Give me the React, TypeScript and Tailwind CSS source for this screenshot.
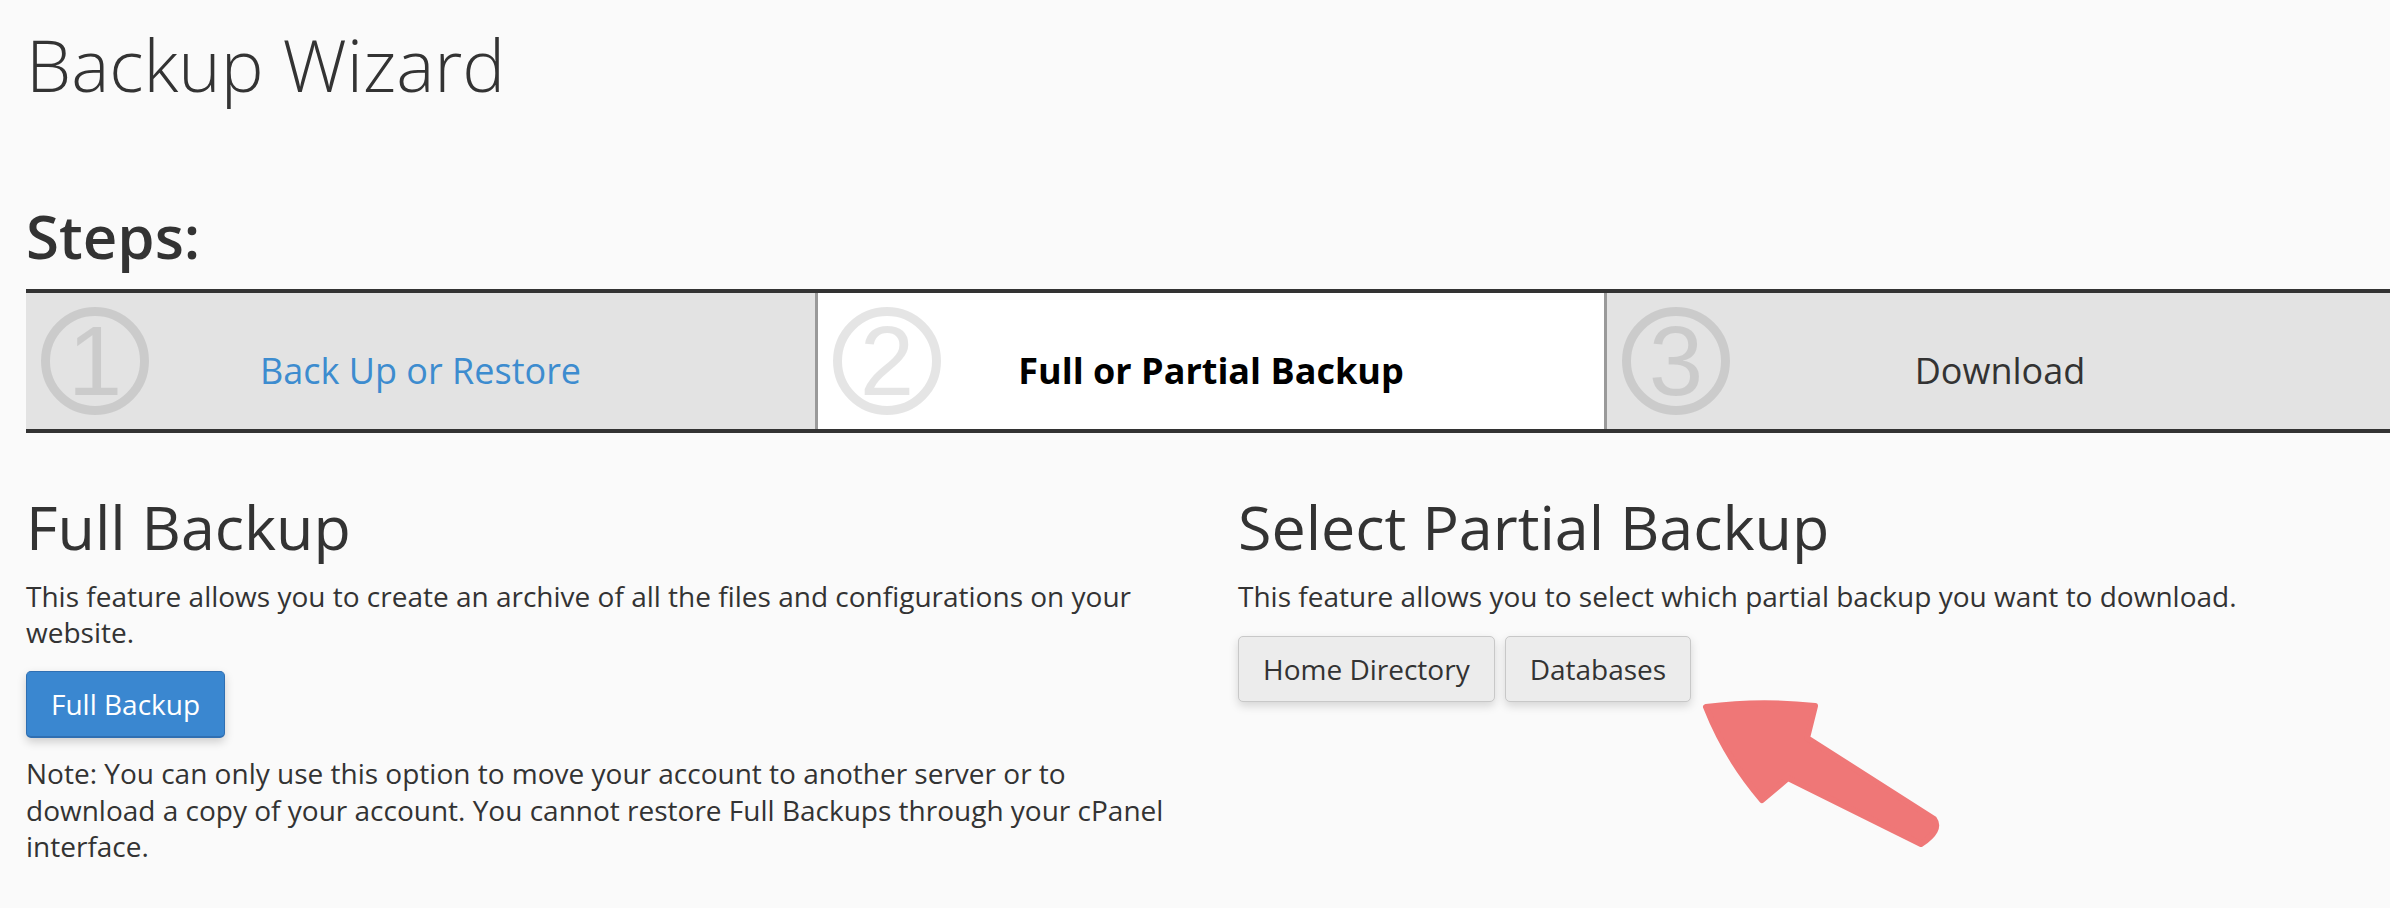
import React from "react";

const STEPS = [
  { n: "1", label: "Back Up or Restore", state: "link" },
  { n: "2", label: "Full or Partial Backup", state: "active" },
  { n: "3", label: "Download", state: "todo" },
];

function StepNumber({ n }: { n: string }) {
  return (
    <svg width="108" height="108" viewBox="0 0 108 108" className="absolute left-[15px] top-[14px]">
      <circle cx="54" cy="54" r="49.5" fill="none" stroke="black" strokeOpacity="0.1" strokeWidth="9" />
      <text
        x="54"
        y="88"
        textAnchor="middle"
        fontFamily="'Liberation Sans', Arial, sans-serif"
        fontSize="98"
        fill="black"
        fillOpacity="0.1"
      >
        {n}
      </text>
    </svg>
  );
}

function PointerArrow() {
  return (
    <svg width="270" height="190" viewBox="0 0 270 190" className="absolute left-[1690px] top-[680px]">
      <path
        d="M16 27 Q70 20 125 26 L117 58 L244 139 Q252 150 231 164 L98 98 L72 120 Q36 78 16 27 Z"
        fill="#ef7777"
        stroke="#ef7777"
        strokeWidth="6"
        strokeLinejoin="round"
      />
    </svg>
  );
}

export default function App() {
  return (
    <div className="relative min-h-screen w-full overflow-hidden bg-[#fafafa] font-['Open_Sans',sans-serif] text-[#333]">
      <div className="pl-[26px] pt-[24px]">
        <h1 className="text-[72px] font-light leading-[80px]">Backup Wizard</h1>

        <h2 className="mt-[99px] text-[60px] font-semibold leading-[66px]">Steps:</h2>

        {/* wizard steps bar */}
        <div className="mt-[20px] flex w-[2367px] border-y-4 border-[#333]">
          {STEPS.map((step, i) => (
            <div
              key={step.n}
              className={`relative flex h-[136px] w-[789px] shrink-0 items-center justify-center pt-[20px] ${
                step.state === "active" ? "bg-white" : "bg-[#e3e3e3]"
              } ${i > 0 ? "border-l-[3px] border-[#9a9a9a]" : ""}`}
            >
              <StepNumber n={step.n} />
              {step.state === "link" && (
                <a href="#" className="text-[36px] leading-[50px] text-[#3d8ccf]">
                  {step.label}
                </a>
              )}
              {step.state === "active" && (
                <span className="text-[36px] font-bold leading-[50px] text-black">{step.label}</span>
              )}
              {step.state === "todo" && (
                <span className="text-[36px] leading-[50px] text-[#333]">{step.label}</span>
              )}
            </div>
          ))}
        </div>

        <div className="mt-[61px] flex">
          {/* Left: full backup */}
          <div className="w-[1212px] shrink-0 pr-[47px]">
            <h2 className="text-[61px] leading-[66px]">Full Backup</h2>
            <p className="mt-[18px] text-[28px] leading-[36px]">
              This feature allows you to create an archive of all the files and configurations on your website.
            </p>
            <button className="mt-[21px] rounded-[5px] border border-[#2f6fb2] border-b-2 bg-[#3a87d0] px-[24px] py-[12px] text-[28px] leading-[40px] text-white shadow-[0_4px_10px_rgba(0,0,0,0.18)]">
              Full Backup
            </button>
            <p className="mt-[17px] text-[28px] leading-[36.5px]">
              Note: You can only use this option to move your account to another server or to download a copy of your
              account. You cannot restore Full Backups through your cPanel interface.
            </p>
          </div>

          {/* Right: partial backup */}
          <div className="flex-1">
            <h2 className="text-[61px] leading-[66px]">Select Partial Backup</h2>
            <p className="mt-[18px] text-[28px] leading-[36px]">
              This feature allows you to select which partial backup you want to download.
            </p>
            <div className="mt-[22px] flex gap-[10px]">
              <button className="rounded-[5px] border border-[#c8c8c8] bg-[#ececec] px-[24px] py-[12px] text-[28px] leading-[40px] text-[#333] shadow-[0_4px_10px_rgba(0,0,0,0.15)]">
                Home Directory
              </button>
              <button className="rounded-[5px] border border-[#c8c8c8] bg-[#ececec] px-[24px] py-[12px] text-[28px] leading-[40px] text-[#333] shadow-[0_4px_10px_rgba(0,0,0,0.15)]">
                Databases
              </button>
            </div>
          </div>
        </div>
      </div>

      <PointerArrow />
    </div>
  );
}
